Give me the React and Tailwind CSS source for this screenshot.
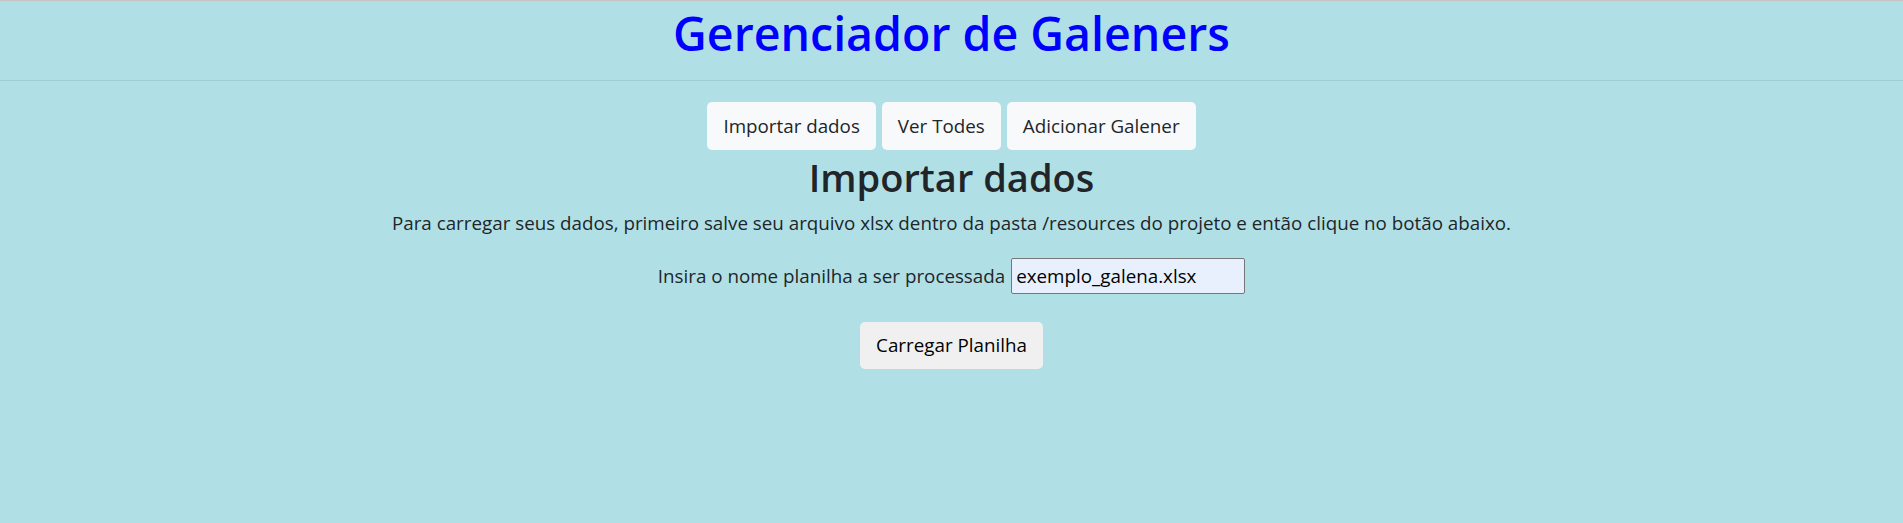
import React, { useState } from "react";

const App = () => {
  const [sheet, setSheet] = useState("exemplo_galena.xlsx");

  return (
    <div className="min-h-[523px] bg-[#b0e0e6] border-t border-[#c4c4c4] text-[#212529] font-['Open_Sans',sans-serif] text-[18.8px]">
      <header className="h-[80px] border-b border-[#9dced4] flex justify-center">
        <h1 className="text-[46.5px] leading-[60px] font-semibold text-[#0000ff] mt-[2px]">
          Gerenciador de Galeners
        </h1>
      </header>

      <div className="flex flex-col items-center">
        <nav className="flex gap-[6px] mt-[21px]">
          <button className="h-[48px] px-[16px] rounded-[5px] bg-[#f8f9fa]">Importar dados</button>
          <button className="h-[48px] px-[16px] rounded-[5px] bg-[#f8f9fa]">Ver Todes</button>
          <button className="h-[48px] px-[16px] rounded-[5px] bg-[#f8f9fa]">Adicionar Galener</button>
        </nav>

        <h2 className="text-[38px] leading-[48px] font-semibold mt-[3px]">Importar dados</h2>
        <p className="mt-[7px] leading-[30px]">
          Para carregar seus dados, primeiro salve seu arquivo xlsx dentro da pasta /resources do projeto e então clique no botão abaixo.
        </p>

        <div className="flex items-center mt-[20px]">
          <label htmlFor="sheet">Insira o nome planilha a ser processada</label>
          <input
            id="sheet"
            value={sheet}
            onChange={(e) => setSheet(e.target.value)}
            className="ml-[6px] w-[234px] h-[36px] px-[4px] bg-[#e8f0fe] border border-[#767676] rounded-[2px] text-black outline-none"
          />
        </div>

        <button className="mt-[28px] h-[47px] px-[16px] rounded-[5px] bg-[#f0f0f0] text-black">
          Carregar Planilha
        </button>
      </div>
    </div>
  );
};

export default App;
